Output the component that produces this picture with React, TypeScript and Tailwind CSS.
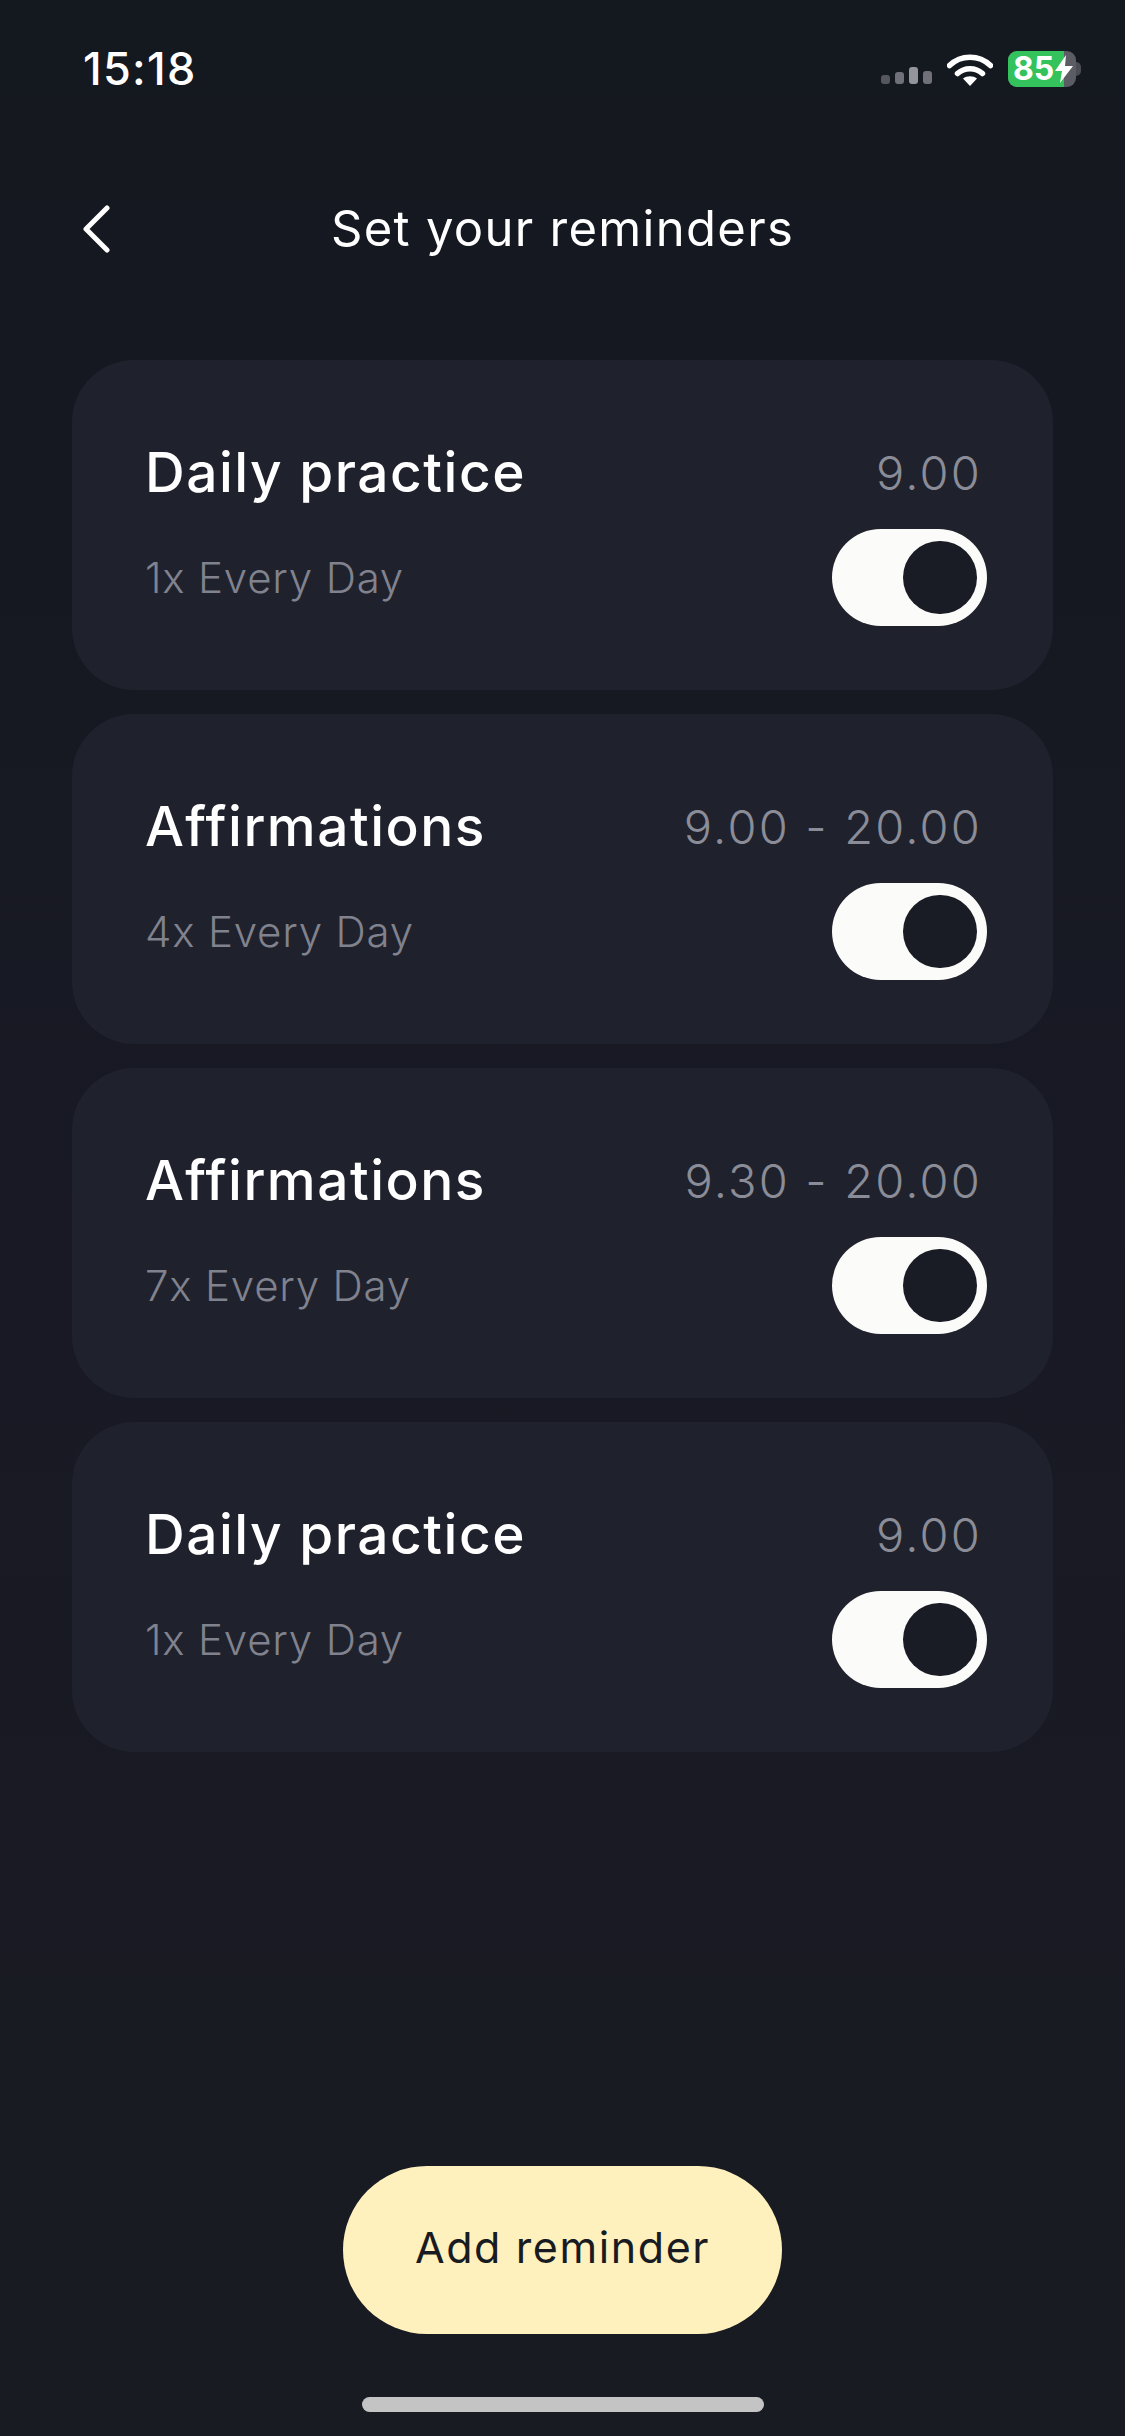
const REMINDERS = [
  { title: 'Daily practice', sub: '1x Every Day', time: '9.00' },
  { title: 'Affirmations', sub: '4x Every Day', time: '9.00 - 20.00' },
  { title: 'Affirmations', sub: '7x Every Day', time: '9.30 - 20.00' },
  { title: 'Daily practice', sub: '1x Every Day', time: '9.00' },
];

function StatusBar() {
  return (
    <div className="h-[140px] pl-[83px] pr-[44px] pt-[44px] flex justify-between items-start">
      <span className="text-[45px] leading-[50px] font-medium text-white tracking-[1.3px]">15:18</span>
      <div className="flex items-start pt-[7px]">
        <svg width="51" height="18" viewBox="0 0 51 18" className="mt-[16px]">
          <rect x="0" y="8" width="9" height="9" rx="3" fill="#55565f" />
          <rect x="14" y="5" width="9" height="12" rx="3" fill="#6f7079" />
          <rect x="28" y="0" width="9" height="17" rx="3" fill="#93949c" />
          <rect x="42" y="4" width="9" height="13" rx="3" fill="#6f7079" />
        </svg>
        <svg width="46" height="33" viewBox="0 0 46 33" className="ml-[15px] mt-[2px]" fill="none">
          <path d="M2.5 12.5C14 1.5 32 1.5 43.5 12.5" stroke="white" strokeWidth="5.5" strokeLinecap="round" />
          <path d="M10.5 20.5C17.5 14 28.500 14 35.500 20.500" stroke="white" strokeWidth="5.5" strokeLinecap="round" />
          <path d="M16 25.500C20 22.500 26 22.500 30 25.500L23 33Z" fill="white" />
        </svg>
        <div className="ml-[15px] flex items-center">
          <div className="w-[68px] h-[36px] relative">
            <div className="w-full h-full rounded-[9px] overflow-hidden bg-[#5c5d64]">
              <div className="w-[56px] h-full bg-[#34c25c]" />
            </div>
            <span className="absolute left-[5px] top-0 text-[32px] leading-[36px] font-bold text-white">85</span>
            <svg width="18" height="28" viewBox="0 0 18 28" className="absolute left-[47px] top-[4px]">
              <path d="M11 0L0 16H7L5 28L18 11H10Z" fill="white" />
            </svg>
          </div>
          <div className="w-[5px] h-[14px] rounded-r-full bg-[#4b4c54]" />
        </div>
      </div>
    </div>
  );
}

function Toggle() {
  return (
    <div className="w-[155px] h-[97px] rounded-full bg-[#fbfbf9] flex items-center justify-end pr-[10px]">
      <div className="w-[74px] h-[73px] rounded-full bg-[#191b25]" />
    </div>
  );
}

function ReminderCard({ title, sub, time }: { title: string; sub: string; time: string }) {
  return (
    <div className="h-[330px] rounded-[62px] bg-[#1f212c] pl-[73px] pr-[66px] pt-[82px]">
      <div className="h-[60px] flex items-center justify-between">
        <span className="text-[55px] leading-[60px] font-medium text-white tracking-[1.5px]">{title}</span>
        <span className="text-[47px] leading-[60px] font-light text-[#8a8c97] tracking-[2.2px] pr-[5px] pt-[2px]">{time}</span>
      </div>
      <div className="mt-[27px] h-[97px] flex items-center justify-between">
        <span className="text-[42px] leading-[60px] font-light text-[#80828e] tracking-[0.8px]">{sub}</span>
        <Toggle />
      </div>
    </div>
  );
}

export default function App() {
  return (
    <div
      className="w-[1125px] h-[2436px] flex flex-col bg-gradient-to-b from-[#14181f] via-[#181924] to-[#191b22]"
      style={{ fontFamily: 'Inter, "Liberation Sans", sans-serif' }}
    >
      <StatusBar />

      {/* Header */}
      <div className="h-[80px] mt-[50px] relative flex items-center justify-center">
        <svg width="28" height="48" viewBox="0 0 28 48" fill="none" className="absolute left-[82px] top-[15px]">
          <path d="M25 3L4 24L25 45" stroke="white" strokeWidth="5" strokeLinecap="round" strokeLinejoin="round" />
        </svg>
        <span className="text-[49px] leading-[60px] text-white tracking-[1.3px] pb-[2px]">Set your reminders</span>
      </div>

      <div className="mt-[90px] px-[72px] flex flex-col gap-[24px]">
        {REMINDERS.map((r, i) => (
          <ReminderCard key={i} title={r.title} sub={r.sub} time={r.time} />
        ))}
      </div>

      <div className="mt-auto flex flex-col items-center pb-[24px]">
        <button className="w-[439px] h-[168px] rounded-full bg-[#fff1bd] text-[#191b22] text-[43px] tracking-[1.6px] pb-[6px]">
          Add reminder
        </button>
        <div className="mt-[63px] w-[402px] h-[15px] rounded-full bg-[#c4c4c4]" />
      </div>
    </div>
  );
}
